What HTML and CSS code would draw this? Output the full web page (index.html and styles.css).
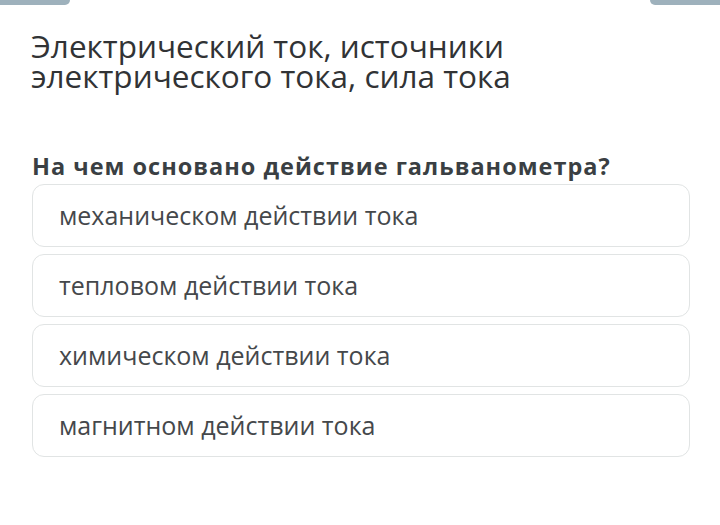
FILE: index.html
```html
<!DOCTYPE html>
<html lang="ru">
<head>
<meta charset="utf-8">
<link rel="stylesheet" href="styles.css">
</head>
<body>
<div class="topbar">
  <div class="tab tab-left"></div>
  <div class="tab tab-right"></div>
</div>
<main class="content">
  <h1 class="title">Электрический ток, источники электрического тока, сила тока</h1>
  <h2 class="question">На чем основано действие гальванометра?</h2>
  <div class="options">
    <div class="option">механическом действии тока</div>
    <div class="option">тепловом действии тока</div>
    <div class="option">химическом действии тока</div>
    <div class="option">магнитном действии тока</div>
  </div>
</main>
</body>
</html>
```

FILE: styles.css
```css
html, body {
  margin: 0;
  padding: 0;
  background: #ffffff;
}
body {
  width: 720px;
  height: 525px;
  overflow: hidden;
  font-family: "Open Sans", "Noto Sans", sans-serif;
  color: #3b3d3f;
}
.topbar {
  display: flex;
  justify-content: space-between;
  height: 5px;
}
.tab {
  width: 70px;
  height: 5px;
  background: #9eb1bc;
}
.tab-left {
  border-bottom-right-radius: 5px;
}
.tab-right {
  border-bottom-left-radius: 5px;
}
.content {
  padding: 0 30px 0 31px;
}
.title {
  margin: 26px 0 0 0;
  font-size: 31.5px;
  font-weight: 400;
  line-height: 30px;
  color: #313335;
  width: 560px;
}
.question {
  margin: 60px 0 0 1px;
  font-size: 23.5px;
  letter-spacing: 1px;
  font-weight: 700;
  line-height: 30px;
  color: #3a3f43;
}
.options {
  display: flex;
  flex-direction: column;
  gap: 7px;
  margin: 3px 0 0 1px;
}
.option {
  box-sizing: border-box;
  height: 63px;
  border: 1px solid #e1e4e4;
  border-radius: 12px;
  display: flex;
  align-items: center;
  padding-left: 26px;
  padding-bottom: 2px;
  font-size: 25px;
  color: #45484b;
}
```
